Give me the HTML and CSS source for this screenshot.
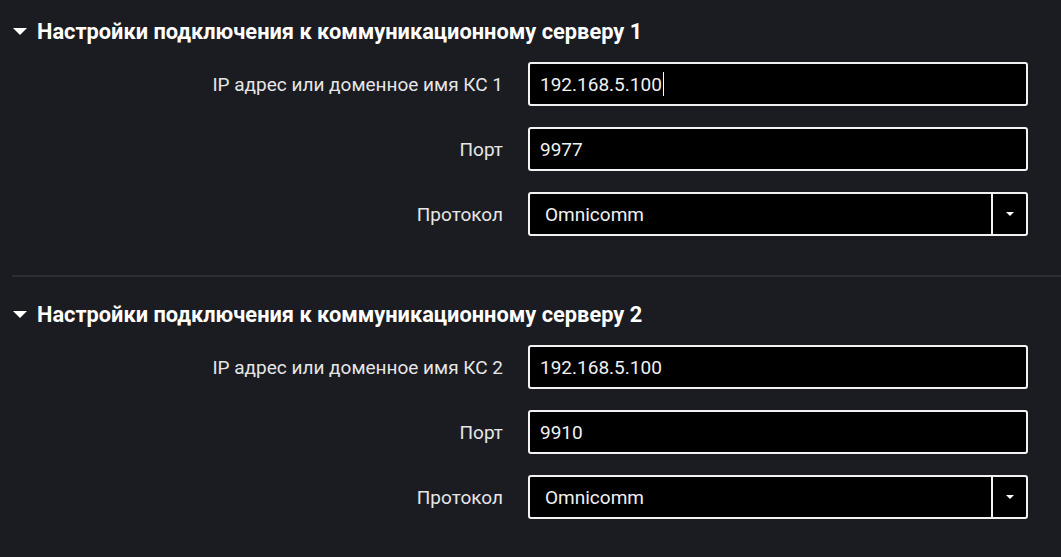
FILE: index.html
```html
<!DOCTYPE html>
<html>
    <head>
        <title>Настройки подключения</title>
        <link rel="stylesheet" href="styles.css">
    </head>
    <body>
        <div class="section">
            <div class="section-title"><span class="caret"></span>Настройки подключения к коммуникационному серверу 1</div>
            <div class="row">
                <label class="row-label">IP адрес или доменное имя КС 1</label>
                <div class="field">192.168.5.100<span class="cursor"></span></div>
            </div>
            <div class="row">
                <label class="row-label">Порт</label>
                <div class="field">9977</div>
            </div>
            <div class="row">
                <label class="row-label">Протокол</label>
                <div class="select">
                    <span class="select-value">Omnicomm</span>
                    <span class="select-btn"><span class="select-arrow"></span></span>
                </div>
            </div>
        </div>
        <hr class="divider">
        <div class="section second">
            <div class="section-title"><span class="caret"></span>Настройки подключения к коммуникационному серверу 2</div>
            <div class="row">
                <label class="row-label">IP адрес или доменное имя КС 2</label>
                <div class="field">192.168.5.100</div>
            </div>
            <div class="row">
                <label class="row-label">Порт</label>
                <div class="field">9910</div>
            </div>
            <div class="row">
                <label class="row-label">Протокол</label>
                <div class="select">
                    <span class="select-value">Omnicomm</span>
                    <span class="select-btn"><span class="select-arrow"></span></span>
                </div>
            </div>
        </div>
    </body>
</html>
```

FILE: styles.css
```css
body{
    margin: 0;
    background-color: #1b1c21;
    color: #ececec;
    font-family: Roboto, "Liberation Sans", sans-serif;
}

.section{
    padding-top: 19px;
}

.section.second{
    padding-top: 25px;
}

.section-title{
    display: flex;
    align-items: center;
    height: 24px;
    padding-left: 13px;
    font-size: 21.8px;
    font-weight: bold;
    color: #fff;
    margin-bottom: 19px;
}

.caret{
    width: 0;
    height: 0;
    border-left: 7px solid transparent;
    border-right: 7px solid transparent;
    border-top: 7px solid #fff;
    margin-right: 10px;
}

.row{
    display: flex;
    align-items: center;
    margin-bottom: 21px;
}

.row:last-child{
    margin-bottom: 0;
}

.row-label{
    width: 528px;
    flex-shrink: 0;
    padding-right: 25px;
    box-sizing: border-box;
    text-align: right;
    font-size: 19px;
    color: #e6e6e6;
}

.field{
    display: flex;
    align-items: center;
    width: 500px;
    height: 44px;
    box-sizing: border-box;
    border: 2px solid #f2f2f2;
    border-radius: 3px;
    background-color: #000;
    padding-left: 10px;
    font-size: 19px;
    color: #f0f0f0;
}

.cursor{
    display: inline-block;
    width: 1px;
    height: 24px;
    background-color: #fff;
    margin-left: 1px;
}

.select{
    display: flex;
    width: 500px;
    height: 44px;
    box-sizing: border-box;
    border: 2px solid #f2f2f2;
    border-radius: 3px;
    background-color: #000;
}

.select-value{
    flex: 1;
    display: flex;
    align-items: center;
    padding-left: 15px;
    font-size: 19px;
    color: #f0f0f0;
}

.select-btn{
    width: 33px;
    border-left: 2px solid #f2f2f2;
    display: flex;
    align-items: center;
    justify-content: center;
}

.select-arrow{
    width: 0;
    height: 0;
    border-left: 4px solid transparent;
    border-right: 4px solid transparent;
    border-top: 4px solid #fff;
}

.divider{
    margin: 39px 0 0 12px;
    border: 0;
    border-top: 2px solid #2c2d33;
}
```
